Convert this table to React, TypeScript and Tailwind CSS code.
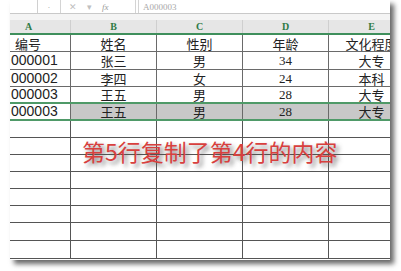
import React from 'react';

const cjk = '"Noto Sans CJK SC", sans-serif';
const sans = '"Liberation Sans", "Noto Sans CJK SC", sans-serif';
const serif = '"Liberation Serif", "Noto Sans CJK SC", serif';

const colLetters = ['A', 'B', 'C', 'D', 'E'];
const widths = ['w-[61px]', 'w-[86px]', 'w-[86px]', 'w-[86px]', 'w-[86px]'];

const rows = [
  ['000001', '张三', '男', '34', '大专'],
  ['000002', '李四', '女', '24', '本科'],
  ['000003', '王五', '男', '28', '大专'],
  ['000003', '王五', '男', '28', '大专'],
];

const heights = ['h-[18px]', 'h-[17px]', 'h-[17px]', 'h-[17px]'];
const emptyHeights = ['h-[17px]', 'h-[17px]', 'h-[17px]', 'h-[17px]', 'h-[17px]', 'h-[17px]', 'h-[18px]', 'h-[18px]'];

export default function App() {
  return (
    <div className="w-[401px] h-[271px] bg-white overflow-hidden">
      <div className="relative ml-[10px] w-[380px] h-[260px] bg-white shadow-[4px_4px_5px_rgba(0,0,0,0.6)] overflow-hidden flex flex-col">
        {/* formula bar, cut at the top */}
        <div className="h-[14px] flex items-end border-b border-[#c9c9c9] shrink-0">
          <div className="w-[28px] h-[14px] border-r border-[#d0d0d0]" />
          <div className="w-[22px] h-[14px] flex items-end justify-center text-[7px] text-[#b0b0b0] leading-none pb-[2px]">·</div>
          <div className="w-[76px] h-[14px] border-x border-[#d4d4d4] flex items-end gap-[10px] pl-[8px] pb-[1px] text-[9px] leading-none text-[#c0c0c0]" style={{ fontFamily: sans }}>
            <span>✕</span>
            <span>▾</span>
            <span className="italic text-[#9a9a9a]" style={{ fontFamily: serif }}>fx</span>
          </div>
          <div className="flex-1 h-[14px] ml-[2px] border-l border-[#d4d4d4] flex items-end pl-[4px] pb-[1px] text-[9px] leading-none text-[#a8a8a8]" style={{ fontFamily: serif }}>
            A000003
          </div>
        </div>
        <div className="h-[6px] bg-[#f4f4f4] shrink-0" />
        {/* column letters */}
        <div className="flex h-[13px] bg-[#e6e6e6] shrink-0">
          {colLetters.map((l, i) => (
            <div
              key={l}
              className={`${widths[i]} shrink-0 border-r border-[#cfcfcf] flex items-center ${i === 0 ? 'pl-[15px]' : 'justify-center'} text-[10px] font-bold text-[#2f7a45] leading-none`}
              style={{ fontFamily: serif }}
            >
              {l}
            </div>
          ))}
        </div>
        <div className="h-[2px] bg-[#3f8f5c] shrink-0" />
        {/* header row */}
        <div className="flex h-[17px] shrink-0">
          {['编号', '姓名', '性别', '年龄', '文化程度'].map((t, i) => (
            <div
              key={t}
              className={`${widths[i]} shrink-0 overflow-hidden whitespace-nowrap border-r border-b border-[#6a6a6a] flex items-center ${i === 0 ? 'pl-[5px]' : 'justify-center'} text-[13px] text-[#222] leading-[15px]`}
              style={{ fontFamily: cjk }}
            >
              {t}
            </div>
          ))}
        </div>
        {/* data rows */}
        {rows.map((r, ri) => {
          const sel = ri === 3;
          const greenBottom = ri === 2 || ri === 3;
          return (
            <div key={ri} className={`flex ${heights[ri]} shrink-0 ${greenBottom ? 'border-b-2 border-[#4f9a68]' : ''}`}>
              {r.map((t, ci) => (
                <div
                  key={ci}
                  className={`${widths[ci]} shrink-0 overflow-hidden border-r border-[#6a6a6a] ${greenBottom ? '' : 'border-b'} ${sel && ci > 0 ? 'bg-[#c8c8c8]' : ''} flex items-center ${ci === 0 ? 'pl-[1px] text-[14px]' : 'justify-center text-[13px]'} text-[#222] leading-[15px]`}
                  style={{ fontFamily: ci === 0 ? sans : ci === 3 ? serif : cjk }}
                >
                  {t}
                </div>
              ))}
            </div>
          );
        })}
        {/* empty rows */}
        {emptyHeights.map((h, ri) => (
          <div key={ri} className={`flex ${h} shrink-0`}>
            {widths.map((w, ci) => (
              <div key={ci} className={`${w} shrink-0 border-r border-b border-[#555]`} />
            ))}
          </div>
        ))}
        {/* annotation */}
        <div
          className="absolute left-[72px] top-[140px] text-[23px] leading-none text-[#d8403e] whitespace-nowrap [text-shadow:3px_3px_4px_rgba(80,80,80,0.7)]"
          style={{ fontFamily: cjk }}
        >
          第5行复制了第4行的内容
        </div>
      </div>
    </div>
  );
}
